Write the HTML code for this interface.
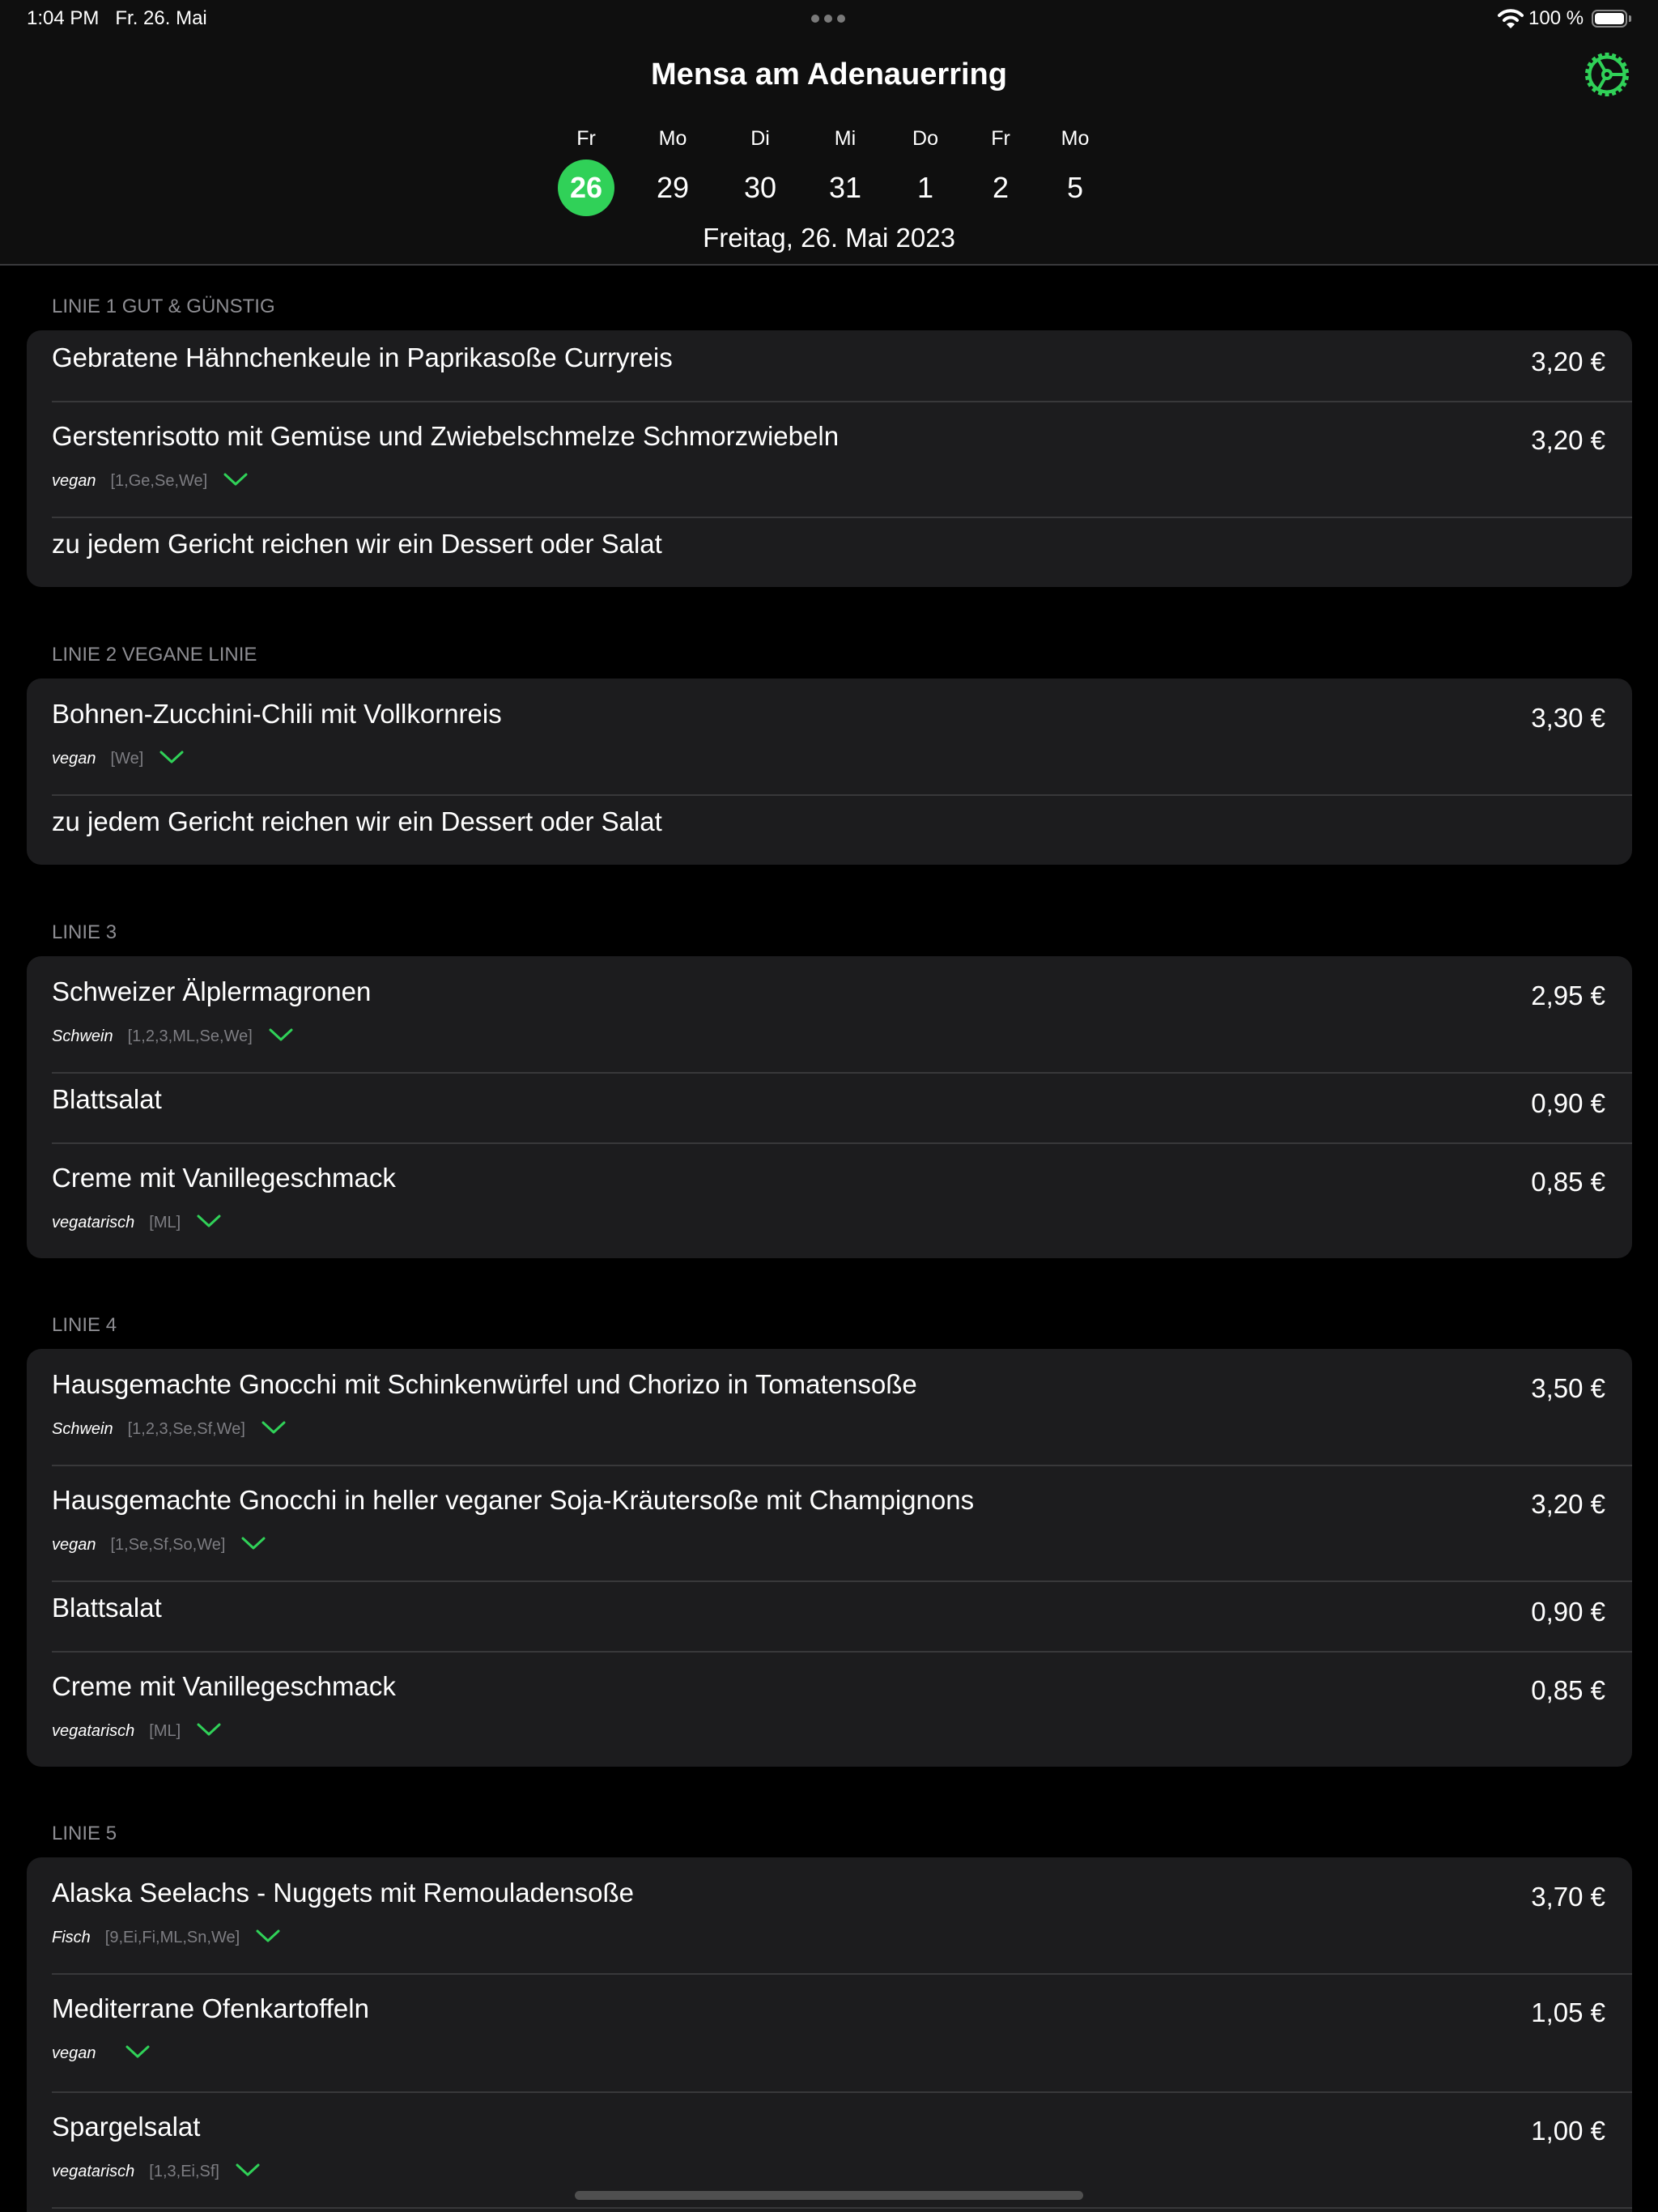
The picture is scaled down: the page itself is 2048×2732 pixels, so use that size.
<!DOCTYPE html>
<html><head><meta charset="utf-8">
<style>
*{margin:0;padding:0;box-sizing:border-box}
html,body{width:2048px;height:2732px;max-height:2732px;overflow:hidden;background:#000;font-family:"Liberation Sans",sans-serif;color:#fff}
body{position:relative}
.hdr{position:absolute;left:0;top:0;width:2048px;height:328px;background:#0f0f0f;border-bottom:2px solid #3a3a3c}
.abs{position:absolute;white-space:nowrap}
.day{position:absolute;width:100px;margin-left:-50px;text-align:center}
.sec{position:absolute;left:33px;width:1983px}
.sh{position:absolute;left:31px;top:-44px;font-size:24px;line-height:30px;color:#8d8d92}
.card{background:#1c1c1e;border-radius:18px;overflow:hidden}
.row{position:relative;height:143px}
.row.p{height:87px}
.row+.row:before{content:"";position:absolute;left:31px;right:0;top:0;height:2px;background:#38383a}
.t{position:absolute;left:31px;top:24px;font-size:33px;line-height:40px;white-space:nowrap}
.pr{position:absolute;right:33px;top:29px;font-size:33px;line-height:40px}
.row.p .t{top:14px}
.row.p .pr{top:19px}
.tg{position:absolute;left:31px;top:84px;height:30px;line-height:30px;font-size:20px;white-space:nowrap;display:flex;align-items:center}
.tg i{color:#fff;font-style:italic;margin-right:18px}
.tg b{font-weight:normal;color:#7d7d82;margin-right:20px}
.tg svg{display:block;margin-top:-4px}
</style></head><body>
<div class="hdr">
  <div class="abs" style="left:33px;top:8px;font-size:24px;line-height:30px">1:04 PM&nbsp;&nbsp; Fr. 26. Mai</div>
  <div class="abs" style="left:1002px;top:18px;width:44px;height:10px">
    <span style="position:absolute;left:0;top:0;width:10px;height:10px;border-radius:5px;background:#7a7a7a"></span>
    <span style="position:absolute;left:16px;top:0;width:10px;height:10px;border-radius:5px;background:#7a7a7a"></span>
    <span style="position:absolute;left:32px;top:0;width:10px;height:10px;border-radius:5px;background:#7a7a7a"></span>
  </div>
  <svg class="abs" style="left:1850px;top:10px" width="32" height="26" viewBox="0 0 32 26">
    <path d="M2 9 A20 20 0 0 1 30 9" stroke="#fff" stroke-width="4" fill="none" stroke-linecap="round"/>
    <path d="M8 15 A11 11 0 0 1 24 15" stroke="#fff" stroke-width="4" fill="none" stroke-linecap="round"/>
    <path d="M16 25 L11 20 A7 7 0 0 1 21 20 Z" fill="#fff"/>
  </svg>
  <div class="abs" style="left:1888px;top:8px;font-size:24px;line-height:30px">100 %</div>
  <div class="abs" style="left:1966px;top:12px;width:44px;height:22px;border:2px solid #8a8a8a;border-radius:7px;padding:2px"><div style="width:100%;height:100%;background:#fff;border-radius:4px"></div></div>
  <div class="abs" style="left:2012px;top:19px;width:3px;height:8px;background:#8a8a8a;border-radius:0 2px 2px 0"></div>
  <div class="abs" style="left:0;width:2048px;text-align:center;top:70px;font-size:38px;line-height:44px;font-weight:bold">Mensa am Adenauerring</div>
  <svg class="abs" style="left:1955px;top:62px" width="60" height="60" viewBox="-30 -30 60 60">
    <g fill="#30d158">
      <g id="tooth"><rect x="-2.5" y="-27" width="5" height="7"/></g>
      <use href="#tooth" transform="rotate(20)"/><use href="#tooth" transform="rotate(40)"/><use href="#tooth" transform="rotate(60)"/><use href="#tooth" transform="rotate(80)"/><use href="#tooth" transform="rotate(100)"/><use href="#tooth" transform="rotate(120)"/><use href="#tooth" transform="rotate(140)"/><use href="#tooth" transform="rotate(160)"/><use href="#tooth" transform="rotate(180)"/><use href="#tooth" transform="rotate(200)"/><use href="#tooth" transform="rotate(220)"/><use href="#tooth" transform="rotate(240)"/><use href="#tooth" transform="rotate(260)"/><use href="#tooth" transform="rotate(280)"/><use href="#tooth" transform="rotate(300)"/><use href="#tooth" transform="rotate(320)"/><use href="#tooth" transform="rotate(340)"/>
    </g>
    <g stroke="#30d158" stroke-width="4" fill="none">
      <circle r="21.5"/>
      <circle r="5"/>
      <path d="M5 0 H21 M-2.5 -4.3 L-10.8 -18.6 M-2.5 4.3 L-10.8 18.6"/>
    </g>
  </svg>
  <div class="day" style="left:724px;top:156px;font-size:25px;line-height:30px">Fr</div>
  <div class="day" style="left:831px;top:156px;font-size:25px;line-height:30px">Mo</div>
  <div class="day" style="left:939px;top:156px;font-size:25px;line-height:30px">Di</div>
  <div class="day" style="left:1044px;top:156px;font-size:25px;line-height:30px">Mi</div>
  <div class="day" style="left:1143px;top:156px;font-size:25px;line-height:30px">Do</div>
  <div class="day" style="left:1236px;top:156px;font-size:25px;line-height:30px">Fr</div>
  <div class="day" style="left:1328px;top:156px;font-size:25px;line-height:30px">Mo</div>
  <div class="abs" style="left:689px;top:197px;width:70px;height:70px;border-radius:35px;background:#30d158"></div>
  <div class="day" style="left:724px;top:212px;font-size:36px;line-height:40px;font-weight:bold">26</div>
  <div class="day" style="left:831px;top:212px;font-size:36px;line-height:40px">29</div>
  <div class="day" style="left:939px;top:212px;font-size:36px;line-height:40px">30</div>
  <div class="day" style="left:1044px;top:212px;font-size:36px;line-height:40px">31</div>
  <div class="day" style="left:1143px;top:212px;font-size:36px;line-height:40px">1</div>
  <div class="day" style="left:1236px;top:212px;font-size:36px;line-height:40px">2</div>
  <div class="day" style="left:1328px;top:212px;font-size:36px;line-height:40px">5</div>
  <div class="abs" style="left:0;width:2048px;text-align:center;top:274px;font-size:33px;line-height:40px">Freitag, 26. Mai 2023</div>
</div>

<svg width="0" height="0" style="position:absolute"><defs><symbol id="chev" viewBox="0 0 30 16"><path d="M2 2 L15 14 L28 2" stroke="#30d158" stroke-width="3" fill="none" stroke-linecap="round" stroke-linejoin="round"/></symbol></defs></svg>

<div class="sec" style="top:408px"><div class="sh">LINIE 1 GUT &amp; GÜNSTIG</div><div class="card">
  <div class="row p"><div class="t">Gebratene Hähnchenkeule in Paprikasoße Curryreis</div><div class="pr">3,20 €</div></div>
  <div class="row"><div class="t">Gerstenrisotto mit Gemüse und Zwiebelschmelze Schmorzwiebeln</div><div class="pr">3,20 €</div><div class="tg"><i>vegan</i><b>[1,Ge,Se,We]</b><svg width="30" height="16"><use href="#chev"/></svg></div></div>
  <div class="row p"><div class="t">zu jedem Gericht reichen wir ein Dessert oder Salat</div></div>
</div></div>

<div class="sec" style="top:838px"><div class="sh">LINIE 2 VEGANE LINIE</div><div class="card">
  <div class="row"><div class="t">Bohnen-Zucchini-Chili mit Vollkornreis</div><div class="pr">3,30 €</div><div class="tg"><i>vegan</i><b>[We]</b><svg width="30" height="16"><use href="#chev"/></svg></div></div>
  <div class="row p"><div class="t">zu jedem Gericht reichen wir ein Dessert oder Salat</div></div>
</div></div>

<div class="sec" style="top:1181px"><div class="sh">LINIE 3</div><div class="card">
  <div class="row"><div class="t">Schweizer Älplermagronen</div><div class="pr">2,95 €</div><div class="tg"><i>Schwein</i><b>[1,2,3,ML,Se,We]</b><svg width="30" height="16"><use href="#chev"/></svg></div></div>
  <div class="row p"><div class="t">Blattsalat</div><div class="pr">0,90 €</div></div>
  <div class="row"><div class="t">Creme mit Vanillegeschmack</div><div class="pr">0,85 €</div><div class="tg"><i>vegatarisch</i><b>[ML]</b><svg width="30" height="16"><use href="#chev"/></svg></div></div>
</div></div>

<div class="sec" style="top:1666px"><div class="sh">LINIE 4</div><div class="card">
  <div class="row"><div class="t">Hausgemachte Gnocchi mit Schinkenwürfel und Chorizo in Tomatensoße</div><div class="pr">3,50 €</div><div class="tg"><i>Schwein</i><b>[1,2,3,Se,Sf,We]</b><svg width="30" height="16"><use href="#chev"/></svg></div></div>
  <div class="row"><div class="t">Hausgemachte Gnocchi in heller veganer Soja-Kräutersoße mit Champignons</div><div class="pr">3,20 €</div><div class="tg"><i>vegan</i><b>[1,Se,Sf,So,We]</b><svg width="30" height="16"><use href="#chev"/></svg></div></div>
  <div class="row p"><div class="t">Blattsalat</div><div class="pr">0,90 €</div></div>
  <div class="row"><div class="t">Creme mit Vanillegeschmack</div><div class="pr">0,85 €</div><div class="tg"><i>vegatarisch</i><b>[ML]</b><svg width="30" height="16"><use href="#chev"/></svg></div></div>
</div></div>

<div class="sec" style="top:2294px"><div class="sh">LINIE 5</div><div class="card" style="border-radius:18px 18px 0 0">
  <div class="row"><div class="t">Alaska Seelachs - Nuggets mit Remouladensoße</div><div class="pr">3,70 €</div><div class="tg"><i>Fisch</i><b>[9,Ei,Fi,ML,Sn,We]</b><svg width="30" height="16"><use href="#chev"/></svg></div></div>
  <div class="row" style="height:146px"><div class="t">Mediterrane Ofenkartoffeln</div><div class="pr">1,05 €</div><div class="tg"><i style="margin-right:36px">vegan</i><svg width="30" height="16"><use href="#chev"/></svg></div></div>
  <div class="row"><div class="t">Spargelsalat</div><div class="pr">1,00 €</div><div class="tg"><i>vegatarisch</i><b>[1,3,Ei,Sf]</b><svg width="30" height="16"><use href="#chev"/></svg></div></div>
  <div class="row" style="height:6px"></div>
</div></div>

<div class="abs" style="left:710px;top:2706px;width:628px;height:11px;border-radius:6px;background:#4f4f4f"></div>
</body></html>
